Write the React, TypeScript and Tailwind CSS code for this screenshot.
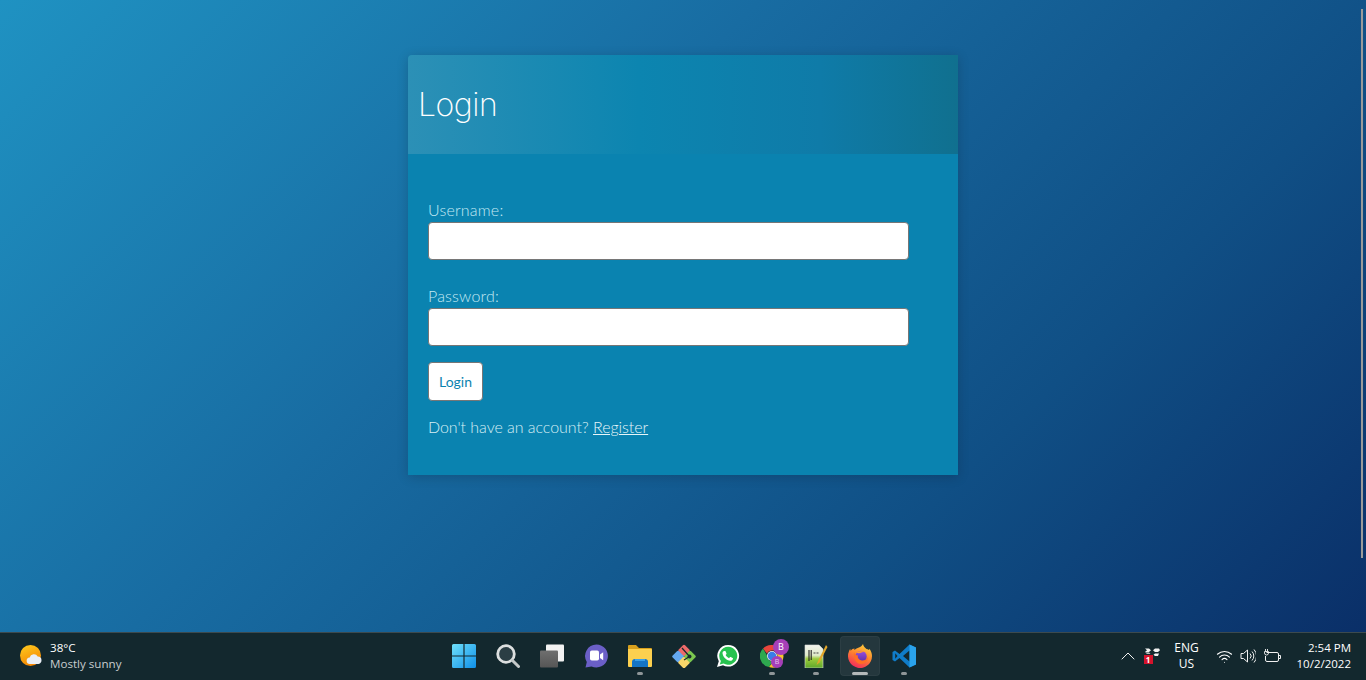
import type { ReactNode } from "react";
import { ChevronUp, Wifi } from "lucide-react";

function Field({ label, type }: { label: string; type: string }) {
  return (
    <div>
      <label className="block font-['Lato',sans-serif] text-[16px] leading-[24px] font-light tracking-[0.2px] text-[#c4e9f3]">{label}</label>
      <input
        type={type}
        className="block h-[38px] w-[481px] rounded-[4px] border border-[#767676] bg-white"
      />
    </div>
  );
}

function WeatherIcon() {
  return (
    <svg width="24" height="24" viewBox="0 0 24 24">
      <defs>
        <linearGradient id="sun" x1="0.2" y1="0" x2="0.6" y2="1">
          <stop offset="0" stopColor="#fdc81e" />
          <stop offset="1" stopColor="#f58300" />
        </linearGradient>
      </defs>
      <circle cx="10.500" cy="11.500" r="10.500" fill="url(#sun)" />
      <path d="M10 20a3.200 3.200 0 0 1-.3-6.400 4.300 4.300 0 0 1 8-1.100 3.700 3.700 0 0 1 3.800 3.600A3.800 3.800 0 0 1 18.500 20z" fill="#e9eef5" />
    </svg>
  );
}

function StartIcon() {
  return (
    <svg width="24" height="24" viewBox="0 0 24 24">
      <defs>
        <linearGradient id="win" x1="0" y1="0" x2="1" y2="1">
          <stop offset="0" stopColor="#6fe0fb" />
          <stop offset="1" stopColor="#0f8fe8" />
        </linearGradient>
      </defs>
      <path d="M0 1.500Q0 0 1.500 0H11.400V11.400H0zM12.600 0H22.500Q24 0 24 1.500V11.400H12.600zM0 12.600H11.400V24H1.500Q0 24 0 22.500zM12.600 12.600H24V22.500Q24 24 22.500 24H12.600z" fill="url(#win)" />
    </svg>
  );
}

function SearchIcon() {
  return (
    <svg width="24" height="24" viewBox="0 0 24 24" fill="none">
      <circle cx="10" cy="10" r="8.300" fill="#2b3e44" stroke="#dcdfdf" strokeWidth="2.800" />
      <path d="M16.500 16.500 22.500 22.500" stroke="#c4c8c8" strokeWidth="3" strokeLinecap="round" />
    </svg>
  );
}

function TaskViewIcon() {
  return (
    <svg width="24" height="24" viewBox="0 0 24 24">
      <defs>
        <linearGradient id="tv" x1="0" y1="0" x2="0" y2="1">
          <stop offset="0" stopColor="#6f6f6f" />
          <stop offset="1" stopColor="#565656" />
        </linearGradient>
      </defs>
      <rect x="6" y="0.500" width="18" height="17" rx="1" fill="#f2f2f2" />
      <rect x="0" y="6.500" width="18" height="17" rx="1" fill="url(#tv)" />
    </svg>
  );
}

function ChatIcon() {
  return (
    <svg width="24" height="24" viewBox="0 0 24 24">
      <path d="M12.500 0.500a11.500 11.500 0 1 1-5 21.900L1.500 23.500 2.800 18A11.500 11.500 0 0 1 12.500 0.500z" fill="#6b5fc7" />
      <rect x="6" y="6.500" width="9" height="10" rx="1.800" fill="#fff" />
      <path d="M16 10.500l3.200-2.300v8l-3.200-2.300z" fill="#fff" />
    </svg>
  );
}

function FolderIcon() {
  return (
    <svg width="24" height="24" viewBox="0 0 24 24">
      <path d="M0 2q0-1 1-1h7l3 3h12q1 0 1 1v2H0z" fill="#d8a01d" />
      <path d="M0 5h23q1 0 1 1v16q0 1-1 1H1q-1 0-1-1z" fill="#fcd04f" />
      <path d="M4 23v-5q0-3 3-3h10q3 0 3 3v5z" fill="#1474c4" />
      <rect x="7" y="15" width="10" height="2" fill="#3aa0e8" />
    </svg>
  );
}

function GitIcon() {
  return (
    <svg width="24" height="24" viewBox="0 0 24 24">
      <rect x="7.500" y="2" width="9" height="9" rx="1.500" transform="rotate(45 12 6.500)" fill="#ee6a6a" />
      <rect x="1.500" y="8" width="9" height="9" rx="1.500" transform="rotate(45 6 12.500)" fill="#64a8f0" />
      <rect x="7.500" y="14" width="9" height="9" rx="1.500" transform="rotate(45 12 18.500)" fill="#f8d66a" />
      <rect x="13.500" y="8" width="9" height="9" rx="1.500" transform="rotate(45 18 12.500)" fill="#7ac74f" />
      <path d="M10 4 17.500 12.500M17.500 12.500 12 16" stroke="#1a2b2e" strokeWidth="1.200" fill="none" />
      <circle cx="17.500" cy="12.500" r="2" fill="#1a2b2e" />
    </svg>
  );
}

function WhatsappIcon() {
  return (
    <svg width="24" height="24" viewBox="0 0 24 24">
      <path d="M12.300 1a10.800 10.800 0 1 1-5.300 20.200L1 23l1.800-5.800A10.800 10.800 0 0 1 12.300 1z" fill="#fff" />
      <path d="M12.300 2.800a9 9 0 1 1-4.700 16.700l-3.800 1 1.100-3.600a9 9 0 0 1 7.400-14.100z" fill="#27c24f" />
      <path d="M8.800 7c.4 0 .7 0 .9.500l.8 1.900c.1.300 0 .6-.2.800l-.7.800c.7 1.400 1.900 2.500 3.400 3.200l.9-1c.2-.2.500-.3.800-.2l1.900.9c.4.200.5.500.400.900-.3 1.400-1.500 2.100-2.800 2-3.800-.4-7.300-3.800-7.700-7.500-.1-1.100.7-2.300 1.800-2.300z" fill="#fff" />
    </svg>
  );
}

function ChromeIcon() {
  return (
    <div className="relative h-[24px] w-[24px]">
      <svg width="24" height="24" viewBox="0 0 24 24" className="absolute inset-0">
        <path d="M12 1a11 11 0 0 1 9.500 5.500H12a5.500 5.500 0 0 0-5 3.200L3 4.500A11 11 0 0 1 12 1z" fill="#e8453c" />
        <path d="M3 4.500 7 11.500a5.500 5.500 0 0 0 5.500 6L9 23A11 11 0 0 1 3 4.500z" fill="#2ea84f" />
        <path d="M21.500 6.500A11 11 0 0 1 9 23l4.500-5.700a5.500 5.500 0 0 0 3-8.300z" fill="#f8c62f" />
        <circle cx="12" cy="12" r="5" fill="#e9edf2" />
        <circle cx="12" cy="12" r="4.200" fill="#3b7de8" />
      </svg>
      <div className="absolute top-[-5px] left-[13px] flex h-[16px] w-[16px] items-center justify-center rounded-full bg-[#a63fb8] font-['Open_Sans',sans-serif] text-[9px] text-white">B</div>
      <div className="absolute top-[12px] left-[11px] flex h-[12px] w-[12px] items-center justify-center rounded-full bg-[#a63fb8] font-['Open_Sans',sans-serif] text-[7px] text-[#e6c8ee]">B</div>
    </div>
  );
}

function NotepadIcon() {
  return (
    <svg width="24" height="24" viewBox="0 0 24 24">
      <defs>
        <linearGradient id="np" x1="0" y1="0" x2="0" y2="1">
          <stop offset="0" stopColor="#f2f4ee" />
          <stop offset="0.45" stopColor="#dfeac8" />
          <stop offset="0.6" stopColor="#9ccc3c" />
          <stop offset="1" stopColor="#5fa72a" />
        </linearGradient>
      </defs>
      <path d="M1 1h14l4 4v19H1z" fill="url(#np)" stroke="#d8dcd8" strokeWidth="0.600" />
      <path d="M5 6v11M7.200 6v10" stroke="#222" strokeWidth="1.100" />
      <path d="M9.500 9h2M12.500 9h2" stroke="#444" strokeWidth="1.100" />
      <path d="M22 1 14 17l-1.500 4 3-2.500L23.500 3z" fill="#e2a62a" />
    </svg>
  );
}

function FirefoxIcon() {
  return (
    <svg width="24" height="24" viewBox="0 0 24 24">
      <defs>
        <linearGradient id="ff" x1="0.75" y1="0" x2="0.3" y2="1">
          <stop offset="0" stopColor="#ffd23c" />
          <stop offset="0.45" stopColor="#ff8a2e" />
          <stop offset="1" stopColor="#f0285c" />
        </linearGradient>
        <linearGradient id="ffg" x1="0.5" y1="0" x2="0.5" y2="1">
          <stop offset="0" stopColor="#9a50e0" />
          <stop offset="1" stopColor="#5a2ea8" />
        </linearGradient>
      </defs>
      <path d="M15 0c.5 2.500 2 3.500 3.500 5 1 .1 2 .5 2.500 1 .3-.4.4-.8.500-1.200C23 7 24 9.500 24 12a12 12 0 1 1-23-4.800c.3-1 .7-1.800 1.300-2.500 0 .9.200 1.500.5 2 .9-1.300 2.400-2.200 3.700-2.200-.2.600-.2 1-.1 1.500C9 3.500 13 4 15 0z" fill="url(#ff)" />
      <circle cx="13" cy="12.500" r="5.700" fill="url(#ffg)" />
      <path d="M6 8C5 14 8 20 13 20c4 0 7-3 7-7-1.500 3-4.500 4-7 3.300-2.500-.8-3.800-2.800-3-4.800-2 0-3.500-1.500-4-3.500z" fill="#ff6f24" />
      <path d="M8.500 8.500c2-1.500 5.500-2.500 8.500-.5-2 0-3.500.3-4.500 1-1 .2-2.800.3-4-.5z" fill="#ff9a2e" />
    </svg>
  );
}

function VscodeIcon() {
  return (
    <svg width="24" height="24" viewBox="0 0 24 24">
      <path d="M17.500 0.500 24 3.500V20.500L17.500 23.500 7.500 14l-4.500 3.500L0.500 16V8L3 6.500 7.500 10zM17.500 6.500 11 12l6.500 5.500z" fill="#0f7cc9" />
      <path d="M17.500 0.500 24 3.500V20.500L17.500 23.500z" fill="#2aa3ec" />
      <path d="M3.200 9.300 5.500 12l-2.300 2.700z" fill="#172a2f" />
    </svg>
  );
}

function DropboxTray() {
  return (
    <div className="relative h-[16px] w-[16px]">
      <svg width="16" height="16" viewBox="0 0 16 16" className="absolute inset-0">
        <path d="M1 0.500h4l2 1.700-2 1.700H1l2-1.700zM9 2.200l2-1.700h4l1 1.700-2 1.700h-3zM11 5.500h4L14 8h-3L9.500 6.800zM1 4.500h4l1.500 1.200H3z" fill="#f1f1f1" />
      </svg>
      <div className="absolute bottom-0 left-0 flex h-[9px] w-[9px] items-center justify-center bg-[#d5132c] font-['Open_Sans',sans-serif] text-[8px] leading-none font-bold text-white">1</div>
    </div>
  );
}

function SpeakerIcon() {
  return (
    <svg width="16" height="16" viewBox="0 0 16 16" fill="none" stroke="#f1f1f1" strokeWidth="1">
      <path d="M1 5.500h2.500L7.500 2v12L3.500 10.500H1z" strokeLinejoin="round" />
      <path d="M10 5.500a3.500 3.500 0 0 1 0 5M12 3.500a6.500 6.500 0 0 1 0 9M14 1.500a9.500 9.500 0 0 1 0 13" />
    </svg>
  );
}

function BatteryIcon() {
  return (
    <svg width="17" height="16" viewBox="0 0 17 16" fill="none" stroke="#f1f1f1" strokeWidth="1">
      <path d="M2.500 4.500H13a1.500 1.500 0 0 1 1.500 1.500v6a1.500 1.500 0 0 1-1.500 1.500H3A1.500 1.500 0 0 1 1.500 12V8" />
      <path d="M14.500 7.500h2v3h-2" />
      <path d="M1.500 1v2M3.500 1v2M0.500 3.500h4V5a2 2 0 0 1-4 0z" strokeWidth="0.900" />
    </svg>
  );
}

function TaskbarItem({ children, dot, active }: { children: ReactNode; dot?: boolean; active?: boolean }) {
  return (
    <div className={`relative flex h-[40px] w-[40px] items-center justify-center rounded-[4px] ${active ? "bg-white/[0.07] shadow-[inset_0_0_0_1px_rgba(255,255,255,0.04)]" : ""}`}>
      {children}
      {dot && <div className={`absolute bottom-[1px] left-1/2 h-[3px] -translate-x-1/2 rounded-full ${active ? "w-[16px] bg-[#b4b9ba]" : "w-[6px] bg-[#8f9698]"}`} />}
    </div>
  );
}

export default function App() {
  return (
    <div className="flex h-[680px] w-[1366px] flex-col overflow-hidden">
      <main className="relative flex h-[632px] justify-center bg-[linear-gradient(135deg,#1f92c2_0%,#186ca2_38%,#104f85_72%,#0a2f68_100%)]">
        <div className="mt-[55px] h-[420px] w-[550px] rounded-tl-[4px] bg-[#0a83b0] shadow-[0_2px_12px_rgba(0,0,0,0.18)]">
          <div className="flex h-[99px] items-center rounded-tl-[4px] bg-[linear-gradient(90deg,#2c90b6_0%,#0c85b0_42%,#0f7ba8_75%,#10708f_100%)] pl-[10px]">
            <h1 className="font-['Inter',sans-serif] text-[32px] leading-none font-extralight tracking-[-0.5px] text-white">Login</h1>
          </div>
          <form className="flex flex-col px-[20px] pt-[44px]">
            <Field label="Username:" type="text" />
            <div className="mt-[24px]">
              <Field label="Password:" type="password" />
            </div>
            <button type="button" className="mt-[16px] h-[39px] w-[55px] rounded-[4px] border border-[#767676] bg-white font-['Lato',sans-serif] text-[14px] text-[#0a83b0]">Login</button>
            <p className="mt-[14px] font-['Lato',sans-serif] text-[16px] leading-[24px] font-light tracking-[-0.05px] text-[#d6eef4]">
              Don't have an account? <a href="#" className="text-[#e6f5f9] underline">Register</a>
            </p>
          </form>
        </div>
        <div className="absolute top-[9px] right-[3px] h-[549px] w-[2px] bg-[#9a9a9a]" />
      </main>
      <footer className="flex h-[48px] items-center border-t border-[#3c4a4e] bg-[#13282e] pb-[1px] pl-[20px] font-['Open_Sans','Noto_Sans',sans-serif]">
        <div className="flex w-[424px] items-center gap-[6px]">
          <WeatherIcon />
          <div className="text-[11.600px] leading-[16px]">
            <div className="text-white">38°C</div>
            <div className="text-[#c8cdce]">Mostly sunny</div>
          </div>
        </div>
        <div className="flex items-center gap-[4px]">
          <TaskbarItem><StartIcon /></TaskbarItem>
          <TaskbarItem><SearchIcon /></TaskbarItem>
          <TaskbarItem><TaskViewIcon /></TaskbarItem>
          <TaskbarItem><ChatIcon /></TaskbarItem>
          <TaskbarItem dot><FolderIcon /></TaskbarItem>
          <TaskbarItem><GitIcon /></TaskbarItem>
          <TaskbarItem><WhatsappIcon /></TaskbarItem>
          <TaskbarItem dot><ChromeIcon /></TaskbarItem>
          <TaskbarItem dot><NotepadIcon /></TaskbarItem>
          <TaskbarItem dot active><FirefoxIcon /></TaskbarItem>
          <TaskbarItem dot><VscodeIcon /></TaskbarItem>
        </div>
        <div className="ml-auto flex items-center pr-[15px] text-white">
          <ChevronUp size={24} strokeWidth={1} className="mr-[4px] text-[#f1f1f1]" />
          <DropboxTray />
          <div className="ml-[10px] w-[34px] text-center text-[12px] leading-[16px]">
            <div>ENG</div>
            <div>US</div>
          </div>
          <Wifi size={17} strokeWidth={1.500} className="ml-[12px]" />
          <div className="ml-[7px]"><SpeakerIcon /></div>
          <div className="ml-[8px]"><BatteryIcon /></div>
          <div className="ml-[16px] text-right text-[11.500px] leading-[16px]">
            <div>2:54 PM</div>
            <div>10/2/2022</div>
          </div>
        </div>
      </footer>
    </div>
  );
}
